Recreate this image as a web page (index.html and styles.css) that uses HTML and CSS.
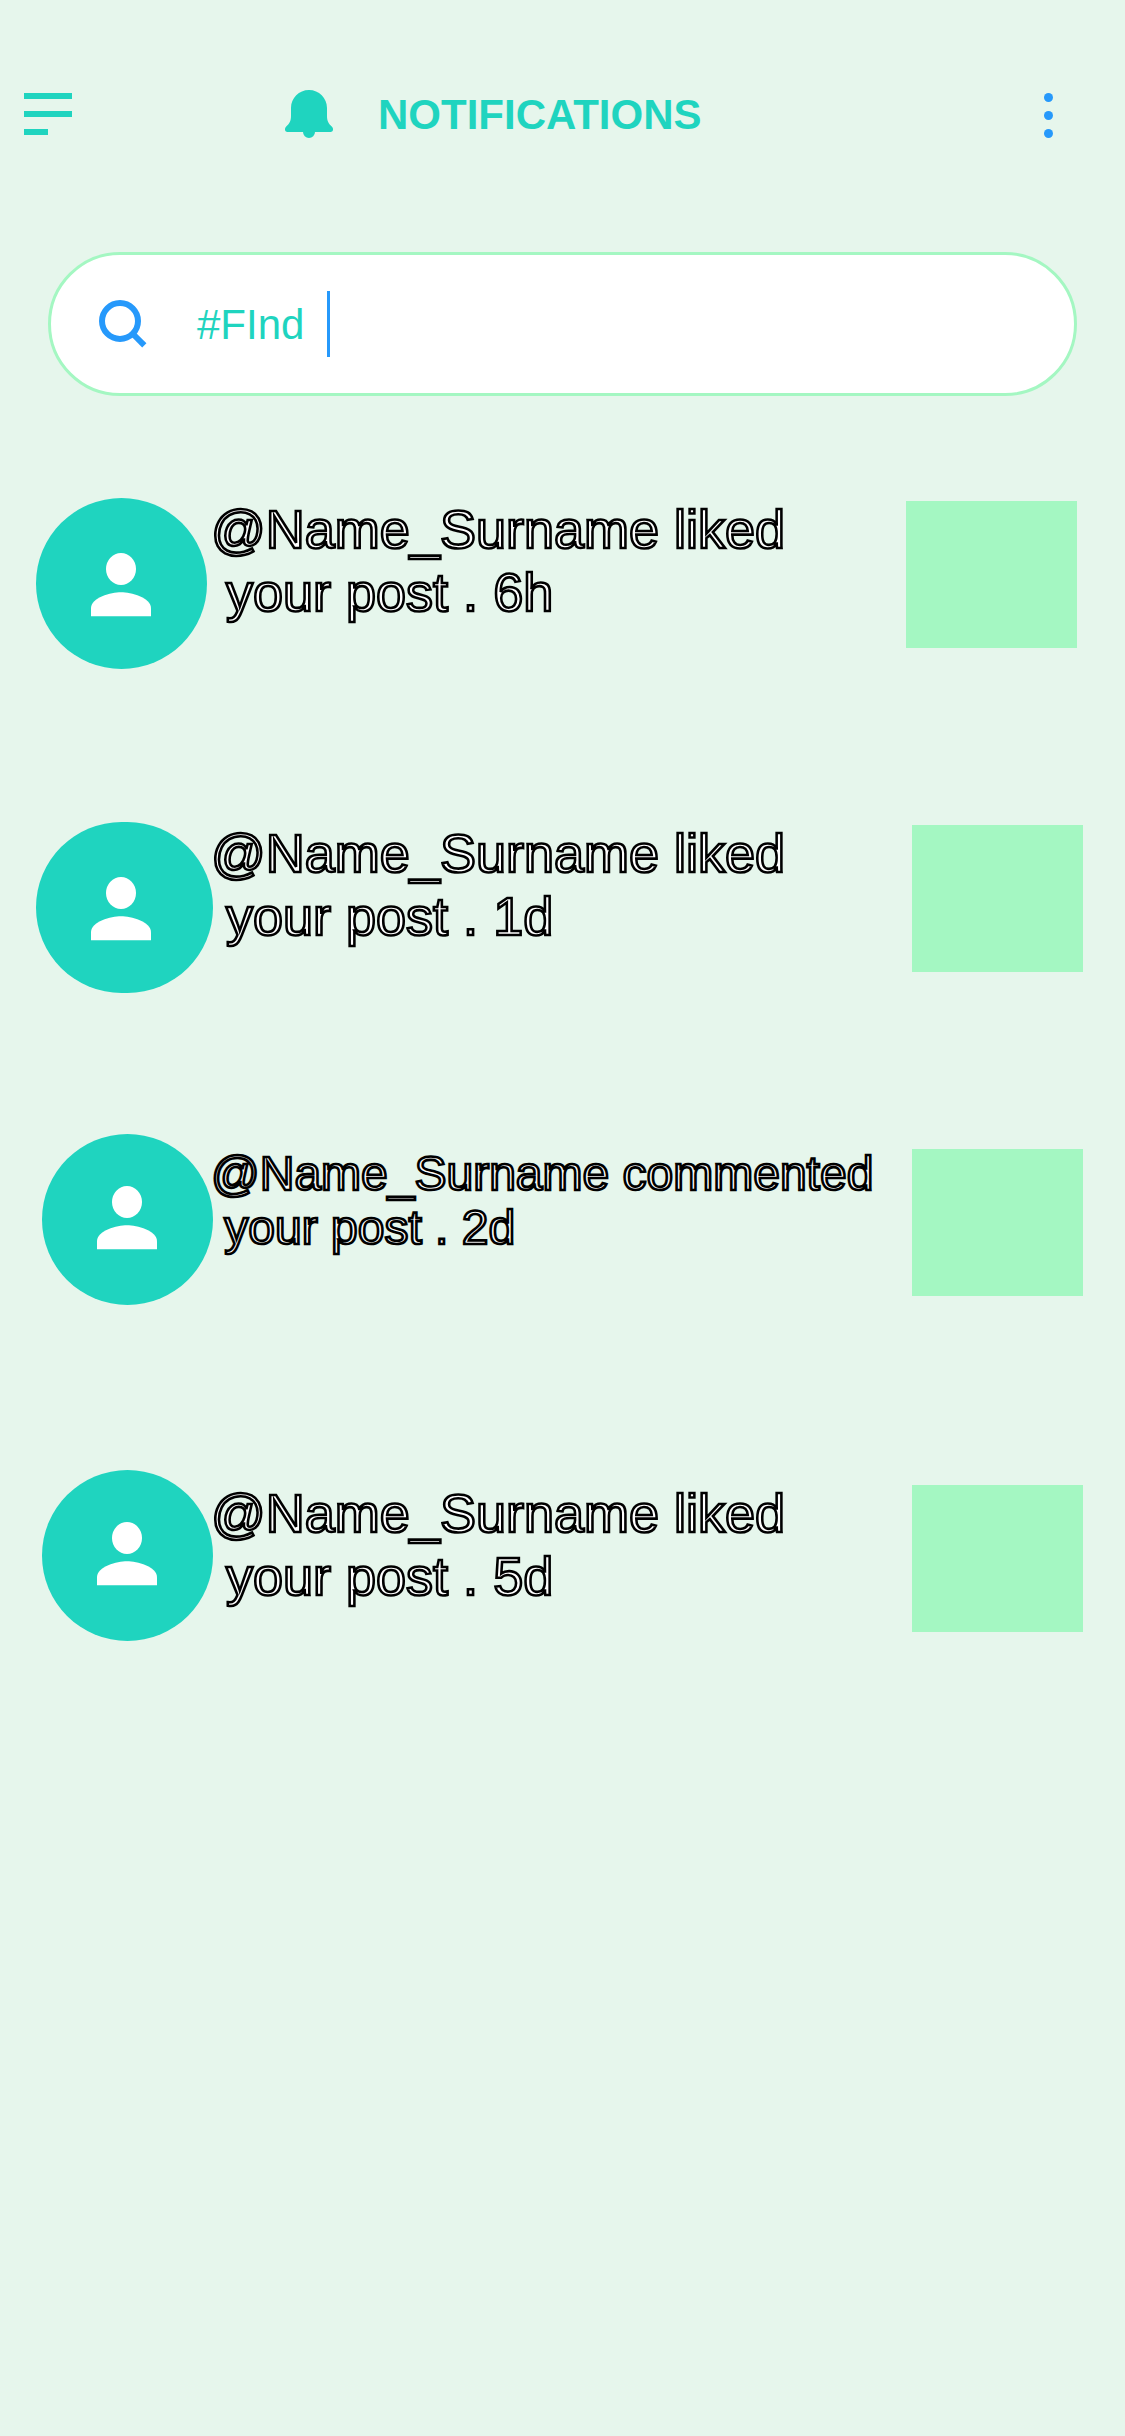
FILE: index.html
```html
<!DOCTYPE html>
<html lang="en">
<head>
<meta charset="utf-8">
<title>Notifications</title>
<link rel="stylesheet" href="styles.css">
</head>
<body>
<svg class="sprite" aria-hidden="true">
  <symbol id="person" viewBox="0 0 60 64">
    <ellipse cx="30" cy="16" rx="15" ry="16"/>
    <path d="M0 63.300V55.300C0 44.700 20 39.300 30 39.300S60 44.700 60 55.300V63.300Z"/>
  </symbol>
</svg>
<header class="topbar">
  <svg class="menu" viewBox="0 0 48 42"><path d="M0 0H48V6H0ZM0 18H48V24H0ZM0 36H24V42H0Z"/></svg>
  <svg class="bell" viewBox="0 0 48 48"><path d="M24 0C34 0 42 8 42 18V26C42 31 43.500 33.500 47 36.800C49 39 48 42 45.500 42H30A6 6 0 0 1 18 42H2.500C0 42 -1 39 1 36.800C4.500 33.500 6 31 6 26V18C6 8 14 0 24 0Z"/></svg>
  <h1 class="title">NOTIFICATIONS</h1>
  <svg class="more" viewBox="0 0 9 45"><circle cx="4.500" cy="4.500" r="4.500"/><circle cx="4.500" cy="22.500" r="4.500"/><circle cx="4.500" cy="40.500" r="4.500"/></svg>
</header>
<div class="search">
  <svg class="lens" viewBox="0 0 48 48"><circle cx="21" cy="21" r="18"/><path d="M33.500 33.500L45.300 45.300"/></svg>
  <span class="query">#FInd</span>
  <span class="caret"></span>
</div>
<main class="list">
  <article class="item first">
    <div class="avatar"><svg class="person"><use href="#person"/></svg></div>
    <p class="text">@Name_Surname liked
 your post . 6h</p>
    <div class="thumb"></div>
  </article>
  <article class="item second">
    <div class="avatar wide"><svg class="person"><use href="#person"/></svg></div>
    <p class="text">@Name_Surname liked
 your post . 1d</p>
    <div class="thumb"></div>
  </article>
  <article class="item inset third">
    <div class="avatar"><svg class="person"><use href="#person"/></svg></div>
    <p class="text small">@Name_Surname commented
 your post . 2d</p>
    <div class="thumb"></div>
  </article>
  <article class="item inset">
    <div class="avatar"><svg class="person"><use href="#person"/></svg></div>
    <p class="text">@Name_Surname liked
 your post . 5d</p>
    <div class="thumb"></div>
  </article>
</main>
</body>
</html>
```
FILE: styles.css
```css
* { box-sizing: border-box; }
body {
  margin: 0;
  width: 1125px;
  min-height: 2436px;
  background: #e6f6ec;
  color: #1fd4bf;
  font-family: "Liberation Sans", Arial, sans-serif;
}
svg { display: block; flex: none; }
.sprite { position: absolute; width: 0; height: 0; }

.topbar {
  display: flex;
  align-items: center;
  height: 228px;
  padding: 0 72px 0 24px;
}
.menu { width: 48px; height: 42px; fill: currentColor; }
.bell { width: 48px; height: 48px; margin-left: 213px; fill: currentColor; }
.title { margin: 0 auto 0 45px; padding-top: 2px; font-size: 42px; line-height: 48px; font-weight: 700; }
.more { width: 9px; height: 45px; margin-top: 3px; fill: #2699fb; }

.search {
  display: flex;
  align-items: center;
  height: 144px;
  margin: 24px 48px 0;
  padding-left: 48px;
  background: #fff;
  border: 3px solid #a4f7c2;
  border-radius: 72px;
}
.lens { width: 48px; height: 48px; fill: none; stroke: #2699fb; stroke-width: 6; }
.query { width: 130px; margin-left: 50px; padding-top: 2px; font-size: 42px; line-height: 48px; }
.caret { width: 3px; height: 66px; background: #2699fb; }

.list { padding: 102px 42px 0 36px; }
.item {
  display: grid;
  grid-template-columns: 175px 1fr 171px;
  align-items: start;
}
.first { height: 324px; }
.second { height: 312px; }
.third { height: 336px; }

.avatar {
  width: 171px;
  height: 171px;
  padding: 55px 0 0 55px;
  border-radius: 86px;
  background: #1fd4bf;
}
.wide { width: 177px; }
.person { width: 60px; height: 64px; fill: #fff; }

.text {
  margin: 0;
  color: #fff;
  font-size: 54px;
  line-height: 63px;
  white-space: pre;
  -webkit-text-stroke: 2.6px #000;
}
.small { font-size: 48px; line-height: 54px; }

.thumb { width: 171px; height: 147px; margin-top: 3px; background: #a4f7c2; }
.first .thumb { margin-left: -6px; }

.inset .avatar { margin-left: 6px; padding-top: 52px; }
.inset .text { margin-top: 12px; }
.inset .small { margin-top: 13px; }
.inset .thumb { margin-top: 15px; }
```
